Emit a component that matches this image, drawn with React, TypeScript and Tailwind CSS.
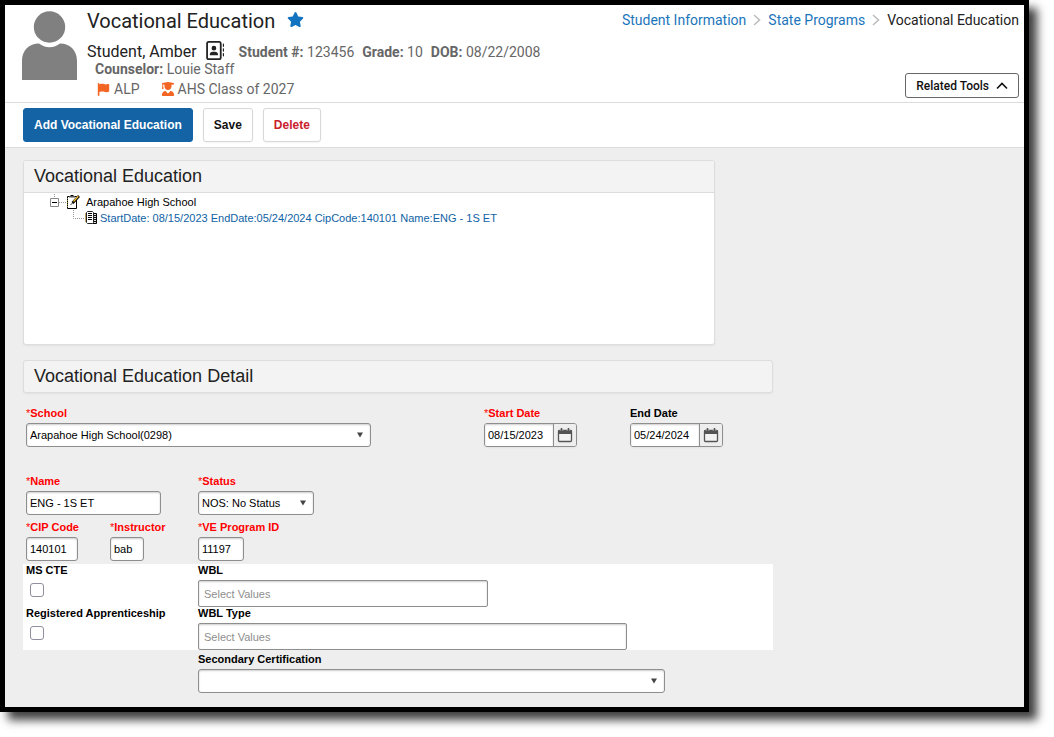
import type { ReactNode } from "react";
import { FaFlag, FaRegAddressBook, FaStar, FaUserGraduate } from "react-icons/fa6";

function Avatar() {
  return (
    <svg viewBox="0 0 55 69" className="h-[69px] w-[55px] shrink-0" fill="#808080" aria-hidden="true">
      <circle cx="27.500" cy="16" r="15.700" />
      <path d="M0 69V50C0 39 7 32.500 17 32.500C20 34.800 23.500 36.300 27.500 36.300C31.500 36.300 35 34.800 38 32.500C48 32.500 55 39 55 50V69Z" />
    </svg>
  );
}

function Separator() {
  return (
    <svg viewBox="0 0 8 12" className="h-3 w-2" fill="none" stroke="#bdbdbd" strokeWidth="1.6" aria-hidden="true">
      <path d="M1 1L6.500 6L1 11" />
    </svg>
  );
}

function CalendarIcon() {
  return (
    <svg viewBox="0 0 16 16" className="h-4 w-4" aria-hidden="true">
      <rect x="1.500" y="3.500" width="13" height="11" rx="1" fill="#f4f4f4" stroke="#555" strokeWidth="1.300" />
      <path d="M1 3h14v4H1z" fill="#555" />
      <path d="M4.500 1v3M11.500 1v3" stroke="#555" strokeWidth="1.600" />
      <path d="M3.200 3v1M5.800 3v1M10.200 3v1M12.800 3v1" stroke="#bbb" strokeWidth="0.700" />
    </svg>
  );
}

function NotepadIcon() {
  return (
    <svg viewBox="0 0 14 16" className="h-4 w-3.5" aria-hidden="true">
      <path d="M1.500 2.500h9v12h-9z" fill="#fff" stroke="#000" />
      <path d="M1.500 4v10" stroke="#8a8a30" strokeDasharray="1 1" />
      <path d="M3 2h6v1.500H3z" fill="#555" />
      <path d="M4.500 1h3v1h-3z" fill="#000" />
      <path d="M13 2L6.500 9" stroke="#000" strokeWidth="2.600" />
      <path d="M12.300 2.300L7.500 7.500" stroke="#e8b830" strokeWidth="1.500" />
      <path d="M4.500 10.500l2-1" stroke="#333" />
    </svg>
  );
}

function RecordIcon() {
  return (
    <svg viewBox="0 0 13 14" className="h-3.5 w-[13px]" aria-hidden="true">
      <path d="M8 2.500h3.500v10H8z" fill="#ddd" stroke="#000" />
      <path d="M9 4.500h2.500M9 6.500h2.500M9 8.500h2.500M9 10.500h2.500" stroke="#111" />
      <path d="M1.500 1.500l1-1h5l1 1v10l-1 1h-5l-1-1z" fill="#fff" stroke="#222" />
      <path d="M0.500 2v9" stroke="#c5a66b" />
      <path d="M3 2.500h4M3 4.500h4M3 6.500h4M3 8.500h4" stroke="#000" strokeWidth="1.200" />
    </svg>
  );
}

function Breadcrumbs() {
  return (
    <nav aria-label="Breadcrumb" className="flex items-center text-sm leading-4 whitespace-nowrap">
      <a href="#student-information" className="text-[#1b75bb]">Student Information</a>
      <span className="flex w-[22px] justify-center"><Separator /></span>
      <a href="#state-programs" className="text-[#1b75bb]">State Programs</a>
      <span className="flex w-[22px] justify-center"><Separator /></span>
      <span className="text-[#222]">Vocational Education</span>
    </nav>
  );
}

function Fact({ name, value }: { name: string; value: string }) {
  return (
    <span>
      <b className="font-bold">{name}</b> {value}
    </span>
  );
}

function Header() {
  return (
    <header className="flex justify-between border-b border-[#dcdcdc] bg-white pr-[5px] pb-1 pl-[17px] font-[Roboto,sans-serif]">
      <div className="flex gap-[10px]">
        <div className="pt-[6px]"><Avatar /></div>
        <div className="pt-1">
          <div className="flex items-center gap-3">
            <h1 className="text-xl leading-6 text-[#222]">Vocational Education</h1>
            <FaStar className="mb-1 size-[17px] text-[#1273c0]" />
          </div>
          <div className="mt-[10px] flex h-[18px] items-center text-sm text-[#666]">
            <span className="text-base leading-[18px] text-[#222]">Student, Amber</span>
            <FaRegAddressBook className="mr-[15px] mb-1 ml-2 size-[19px] text-[#222]" />
            <span className="flex gap-2">
              <Fact name="Student #:" value="123456" />
              <Fact name="Grade:" value="10" />
              <Fact name="DOB:" value="08/22/2008" />
            </span>
          </div>
          <div className="pl-2 text-sm leading-4 text-[#666]">
            <Fact name="Counselor:" value="Louie Staff" />
          </div>
          <div className="mt-1 flex gap-[21px] pl-[10px] text-sm leading-4 text-[#666]">
            <span className="flex items-center gap-1">
              <FaFlag className="size-[13px] text-[#f26522]" />ALP
            </span>
            <span className="flex items-center gap-[3px]">
              <FaUserGraduate className="size-[14px] text-[#f26522]" />AHS Class of 2027
            </span>
          </div>
          <div className="h-px" />
        </div>
      </div>
      <div className="flex flex-col items-end justify-between pt-[7px]">
        <Breadcrumbs />
        <button type="button" className="flex h-[25px] items-center gap-[7px] rounded-[3px] border border-[#666] bg-white px-[10px] text-xs font-medium text-[#111]">
          Related Tools
          <svg viewBox="0 0 12 8" className="h-2 w-3" fill="none" stroke="currentColor" strokeWidth="1.600" aria-hidden="true">
            <path d="M1 6.500L6 1.500L11 6.500" />
          </svg>
        </button>
      </div>
    </header>
  );
}

function Toolbar() {
  const base = "h-[34px] rounded-[3px] border px-[10px] text-xs font-bold";
  return (
    <div className="flex gap-[10px] border-b border-[#dcdcdc] bg-white px-[18px] py-[5px]">
      <button type="button" className={`${base} border-[#1464a5] bg-[#1464a5] text-white`}>Add Vocational Education</button>
      <button type="button" className={`${base} border-[#d8d8d8] bg-white text-[#111] shadow-xs`}>Save</button>
      <button type="button" className={`${base} border-[#d8d8d8] bg-white text-[#c9202c] shadow-xs`}>Delete</button>
    </div>
  );
}

function TreePanel() {
  return (
    <section className="min-h-[185px] w-full max-w-[692px] overflow-hidden rounded-[3px] border border-[#ddd] bg-white shadow-xs">
      <h2 className="border-b border-[#ddd] bg-[#f3f3f3] px-[10px] text-lg leading-[31px] text-[#222]">Vocational Education</h2>
      <ul className="pt-px pl-[26px] text-[11px] leading-4">
        <li>
          <div className="flex items-center">
            <svg viewBox="0 0 16 16" className="size-4" fill="none" aria-hidden="true">
              <path d="M4.500 0v4M9 8.500h7" stroke="#999" strokeDasharray="1 1" />
              <path d="M0.500 4.500h8v8h-8z" fill="#fff" stroke="#888" />
              <path d="M2 8.500h5" stroke="#000" />
            </svg>
            <NotepadIcon />
            <span className="pl-[6px] text-black">Arapahoe High School</span>
          </div>
          <ul className="pl-[23px]">
            <li className="flex items-center">
              <svg viewBox="0 0 12 16" className="h-4 w-3" fill="none" stroke="#999" strokeDasharray="1 1" aria-hidden="true">
                <path d="M0.500 0v8.500H12" />
              </svg>
              <RecordIcon />
              <a href="#record" className="pl-[2px] text-[#0f62a5]">
                StartDate: 08/15/2023 EndDate:05/24/2024 CipCode:140101 Name:ENG - 1S ET
              </a>
            </li>
          </ul>
        </li>
      </ul>
    </section>
  );
}

function Field({ id, label, required, className = "", children }: { id: string; label: string; required?: boolean; className?: string; children: ReactNode }) {
  return (
    <div className={className}>
      <label htmlFor={id} className={`mb-1 block text-[11px] leading-3 font-bold whitespace-nowrap ${required ? "text-[#f00]" : "text-black"}`}>
        {required && <span className="font-normal">*</span>}
        {label}
      </label>
      {children}
    </div>
  );
}

const box = "block h-6 rounded-[3px] border border-[#8e8e8e] bg-white px-[3px] text-[11px] text-black shadow-[inset_0_1px_2px_rgba(0,0,0,0.2)]";

function TextBox({ id, value, width }: { id: string; value: string; width: string }) {
  return <input id={id} type="text" defaultValue={value} className={`${box} ${width}`} />;
}

function SelectBox({ id, value, width }: { id: string; value: string; width: string }) {
  return (
    <div className={`relative ${width}`}>
      <select id={id} className={`${box} w-full appearance-none`}>
        <option>{value}</option>
      </select>
      <svg viewBox="0 0 6 6" className="pointer-events-none absolute top-[9px] right-[8px] size-[6px]" fill="#444" aria-hidden="true">
        <path d="M0 0.500h6L3 5.500z" />
      </svg>
    </div>
  );
}

function DateBox({ id, value, name }: { id: string; value: string; name: string }) {
  return (
    <div className="flex h-6 w-[93px] overflow-hidden rounded-[3px] border border-[#8e8e8e] shadow-xs">
      <input id={id} type="text" defaultValue={value} className="w-[69px] border-r border-[#8e8e8e] bg-white px-[3px] text-[11px] text-black shadow-[inset_0_1px_2px_rgba(0,0,0,0.2)]" />
      <button type="button" aria-label={name} className="flex flex-1 items-center justify-center bg-[#eee]">
        <CalendarIcon />
      </button>
    </div>
  );
}

function MultiSelect({ id, width }: { id: string; width: string }) {
  return (
    <input
      id={id}
      type="text"
      placeholder="Select Values"
      className={`block h-[27px] rounded-[2px] border border-[#8e8e8e] bg-white px-[5px] text-[11px] shadow-[inset_0_1px_2px_rgba(0,0,0,0.2)] placeholder:text-[#8e8e8e] ${width}`}
    />
  );
}

function Check({ id }: { id: string }) {
  return (
    <input
      id={id}
      type="checkbox"
      className="mt-[7px] ml-[4px] block size-[14px] appearance-none rounded-[3px] border border-[#8f8f9d] bg-white checked:bg-[#1464a5]"
    />
  );
}

function DetailForm() {
  const row = "grid grid-cols-[84px_88px_286px_146px_1fr] pl-[3px]";
  return (
    <form className="w-full max-w-[750px]">
      <h2 className="rounded-[3px] border border-[#ddd] bg-[#f3f3f3] px-[10px] text-lg leading-[31px] text-[#222] shadow-xs">Vocational Education Detail</h2>
      <div className={`${row} mt-[14px]`}>
        <Field id="school" label="School" required className="col-span-3">
          <SelectBox id="school" value="Arapahoe High School(0298)" width="w-[345px]" />
        </Field>
        <Field id="start" label="Start Date" required>
          <DateBox id="start" value="08/15/2023" name="Choose start date" />
        </Field>
        <Field id="end" label="End Date">
          <DateBox id="end" value="05/24/2024" name="Choose end date" />
        </Field>
      </div>
      <div className={`${row} mt-7`}>
        <Field id="name" label="Name" required className="col-span-2">
          <TextBox id="name" value="ENG - 1S ET" width="w-[135px]" />
        </Field>
        <Field id="status" label="Status" required>
          <SelectBox id="status" value="NOS: No Status" width="w-[116px]" />
        </Field>
      </div>
      <div className={`${row} mt-[6px]`}>
        <Field id="cip" label="CIP Code" required>
          <TextBox id="cip" value="140101" width="w-[52px]" />
        </Field>
        <Field id="instructor" label="Instructor" required>
          <TextBox id="instructor" value="bab" width="w-[34px]" />
        </Field>
        <Field id="program" label="VE Program ID" required>
          <TextBox id="program" value="11197" width="w-[46px]" />
        </Field>
      </div>
      <div className={`${row} mt-[3px] bg-white`}>
        <Field id="mscte" label="MS CTE" className="col-span-2"><Check id="mscte" /></Field>
        <Field id="wbl" label="WBL" className="col-span-3"><MultiSelect id="wbl" width="w-[290px]" /></Field>
        <Field id="apprentice" label="Registered Apprenticeship" className="col-span-2"><Check id="apprentice" /></Field>
        <Field id="wbltype" label="WBL Type" className="col-span-3"><MultiSelect id="wbltype" width="w-[429px]" /></Field>
      </div>
      <div className={`${row} mt-[3px]`}>
        <Field id="cert" label="Secondary Certification" className="col-span-3 col-start-3">
          <SelectBox id="cert" value="" width="w-[467px]" />
        </Field>
      </div>
    </form>
  );
}

export default function App() {
  return (
    <div className="bg-white pr-[25px] pb-[25px] font-['Liberation_Sans',Arial,sans-serif]">
      <div className="border-[5px] border-black bg-[#eee] shadow-[8px_8px_9px_rgba(0,0,0,0.75)]">
        <Header />
        <Toolbar />
        <main className="flex flex-col gap-[15px] px-[18px] pt-3 pb-[14px]">
          <TreePanel />
          <DetailForm />
        </main>
      </div>
    </div>
  );
}
